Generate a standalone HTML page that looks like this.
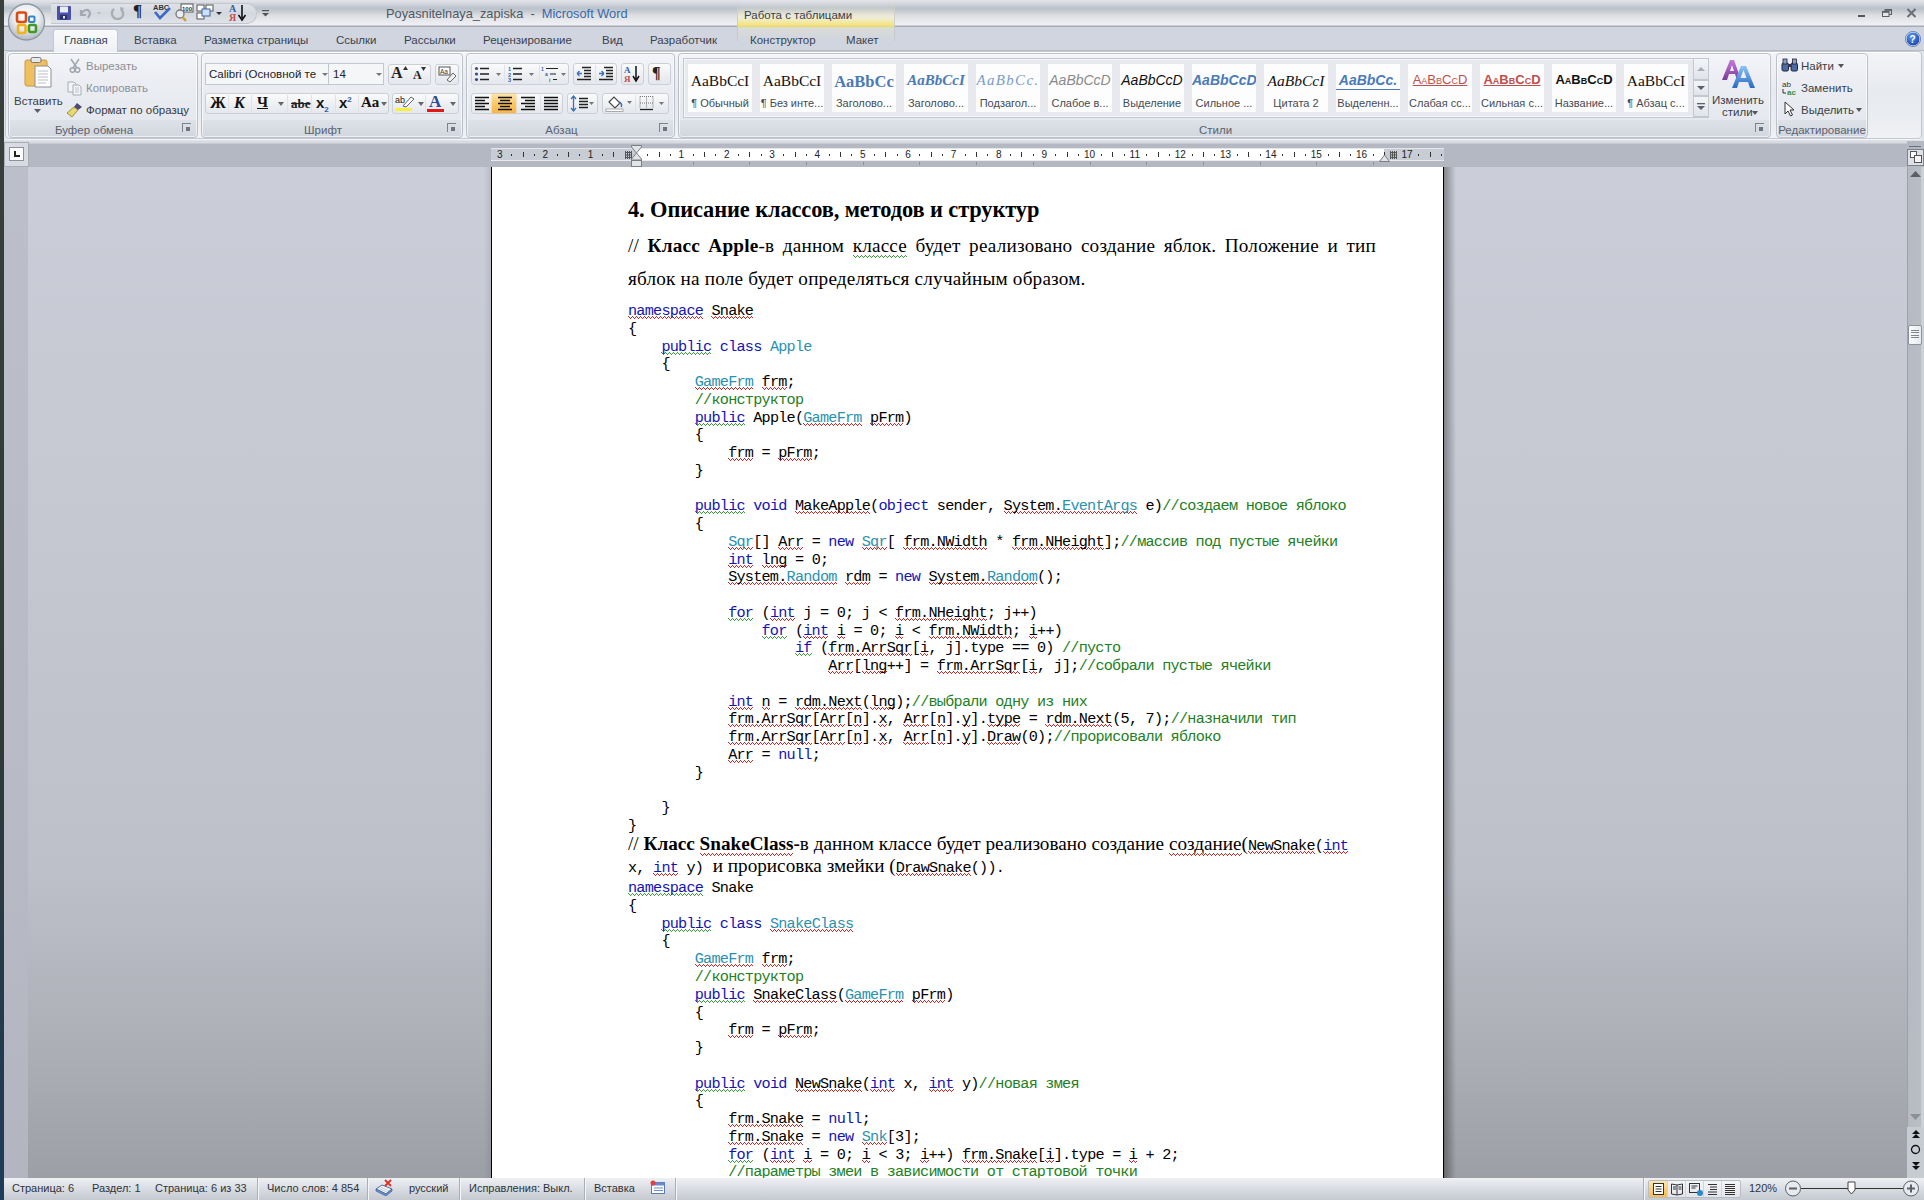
<!DOCTYPE html>
<html><head><meta charset="utf-8"><style>
*{box-sizing:border-box}
html,body{margin:0;padding:0;width:1924px;height:1200px;overflow:hidden;background:#cfd4dc;font-family:"Liberation Sans",sans-serif;}
.a{position:absolute}
#strip{left:0;top:0;width:4px;height:1200px;background:linear-gradient(#3a403c,#2f3a36 60%,#1e3b5a)}
#title{left:4px;top:0;width:1920px;height:27px;background:linear-gradient(#e3e4e8 0px,#d2d6dc 4px,#b9c2cb 8px,#c4cad1 11px,#dcdde0 15px,#e6e8ec 20px,#eef0f5 25px,#a6abb3 26px)}
#tabs{left:4px;top:27px;width:1920px;height:24px;background:#d0d5df;border-bottom:1px solid #b8bcc2}
#ribbon{left:4px;top:51px;width:1920px;height:90px;background:#dfe2e8}
#ribpanel{left:5px;top:51px;width:1917px;height:88px;border:1px solid #c3c8cf;border-radius:4px;background:linear-gradient(#f3f4f7 0,#e7eaef 45%,#e9ecf0 75%,#f1f2f5 100%);box-shadow:inset 0 1px 0 #fff,0 1px 0 #f4f5f7}
#rulerband{left:4px;top:141px;width:1920px;height:26px;background:linear-gradient(#d8dbe0 0,#d8dbe0 2px,#b3b8c3 3px,#b3b8c3 26px)}
#docbg{left:4px;top:167px;width:1904px;height:1011px;background:linear-gradient(#cbced8 0%,#c4c7d0 40%,#bdc0c9 70%,#abaeb5 88%,#9c9fa6 100%)}
#vruler{left:4px;top:167px;width:24px;height:1011px;background:linear-gradient(#bcbfc9 0%,#b8bbc5 60%,#b3b6c0 100%)}
#page{left:491px;top:167px;width:953px;height:1011px;background:#fff;border-left:1px solid #000;border-right:1px solid #000}
#pshadow{left:1444px;top:167px;width:12px;height:1011px;background:linear-gradient(90deg,rgba(0,0,0,.35),rgba(0,0,0,0))}
#scroll{left:1907px;top:167px;width:17px;height:1011px;background:linear-gradient(90deg,#9da2aa 0,#9da2aa 1px,#b6bac3 1px,#b9bdc6 14px,#d6d9de 15px,#c4c8cf 17px)}
#status{left:4px;top:1178px;width:1920px;height:22px;background:linear-gradient(#eef0f3,#d9dce2 50%,#c5c9d0)}
#doc{position:absolute;left:0;top:167px;width:1924px;height:1011px;overflow:hidden}
#doc>div{position:absolute;white-space:pre;margin-top:-167px}
.cl{left:628px;font-family:"Liberation Mono",monospace;font-size:15.2px;letter-spacing:-0.77px;line-height:18px;color:#000}
.tx{left:628px;font-family:"Liberation Serif",serif;font-size:19.2px;letter-spacing:0.2px;line-height:22px;color:#000}
.tx.j{width:748px;text-align:justify;text-align-last:justify;white-space:normal}
.h1{left:628px;font-family:"Liberation Serif",serif;font-size:22.4px;font-weight:bold;letter-spacing:-0.1px;line-height:26px;color:#000}
.m{font-family:"Liberation Mono",monospace;font-size:15.2px;letter-spacing:-0.77px}
.k{color:#1414b4}
.t{color:#2b91af}
.g{color:#1e801e}
.r,.w{--c:#c42a2a;background-image:linear-gradient(90deg,var(--c) 0 1px,transparent 1px),linear-gradient(90deg,transparent 0 1px,var(--c) 1px 2px,transparent 2px 3px,var(--c) 3px),linear-gradient(90deg,transparent 0 2px,var(--c) 2px 3px,transparent 3px);background-size:4px 1px;background-repeat:repeat-x;background-position:0 14px,0 15px,0 16px}
.w{--c:#3a9a3a}
.tx .r,.tx .w{background-position:0 20px,0 21px,0 22px;padding-bottom:3px}
.tx .m .r,.tx .m .w{background-position:0 14px,0 15px,0 16px;padding-bottom:0}
.ui{font-family:"Liberation Sans",sans-serif;font-size:11.5px;line-height:14px;white-space:nowrap;color:#333a44}
#qat{left:51px;top:3px;width:206px;height:21px;border-radius:0 10px 10px 0;background:linear-gradient(#dfe2e8,#d3d8df 50%,#dfe3e9);border:1px solid #c2c7cf;border-left:none}
#ctxhead{left:737px;top:4px;width:158px;height:23px;background:linear-gradient(rgba(255,255,255,0) 0,rgba(250,245,200,.5) 60%,#f3e37b 92%,#e8d66a 100%);border-left:1px solid #cdd0c8;border-right:1px solid #cdd0c8}
#ctxtabs{left:737px;top:27px;width:158px;height:14px;border-left:1px solid #c5c9ce;border-right:1px solid #c5c9ce;background:linear-gradient(rgba(240,235,200,.35),rgba(208,213,223,0))}
.tab{top:33px;color:#3a4350}
#tabactive{left:53px;top:29px;width:65px;height:23px;border:1px solid #c4c9d1;border-bottom:none;border-radius:3px 3px 0 0;background:linear-gradient(#f9fafc,#eef0f5)}
.grp{top:53px;height:85px;border:1px solid #bcc1c9;border-radius:4px;background:linear-gradient(#f3f4f8 0,#eceef3 30%,#e5e8ee 80%,#dde1e8 80%,#d2d7df 100%);box-shadow:inset 0 0 0 1px rgba(255,255,255,.6)}
.gl{position:absolute;left:0;right:18px;bottom:0px;text-align:center;font-size:11.5px;line-height:14px;color:#5a626d;white-space:nowrap}
.lnch{position:absolute;right:6px;bottom:5px;width:9px;height:9px;border-left:1px solid #7b838d;border-top:1px solid #7b838d}
.lnch:after{content:"";position:absolute;left:3px;top:3px;width:4px;height:4px;background:#6d7580}
.fld{height:22px;border:1px solid #c3c8d0;background:#f5f6f8}
.fld span{position:absolute;top:3px;font-size:11.5px;line-height:14px;color:#222;white-space:nowrap}
.fld i{position:absolute;top:9px;width:0;height:0;border-left:3px solid transparent;border-right:3px solid transparent;border-top:3px solid #777}
.bgrp{border:1px solid #cbd0d7;border-radius:3px;background:linear-gradient(#fbfbfc,#eef0f3 50%,#e4e7ec)}
.sep{width:1px;height:17px;background:#dfe2e7}
#gal{left:683px;top:58px;width:1026px;height:60px;border:1px solid #c3c8d0;background:#e7e9ee;box-shadow:inset 0 0 0 1px #f6f7f9}
.tile{top:64px;width:64px;height:48px;background:#fdfdfd}
.smp{position:absolute;left:0;right:0;top:8px;text-align:center;white-space:nowrap;line-height:19px;overflow:hidden}
.tl{position:absolute;left:0;right:0;top:32px;text-align:center;font-size:11px;line-height:14px;color:#444b55;white-space:nowrap;overflow:hidden}
#galsc{left:1693px;top:58px;width:16px;height:60px}
#galsc div{position:absolute;left:0;width:16px;border:1px solid #c3c8d0;background:linear-gradient(#f4f5f8,#e0e3e9)}
.rn{top:149px;width:20px;text-align:center;font-size:10px;line-height:12px;color:#222}
.st{top:1181px;font-size:11px;line-height:14px;color:#2e343c;white-space:nowrap}
.ssep{top:1178px;width:2px;height:22px;background:linear-gradient(90deg,#aab0b8 0 1px,#f4f5f7 1px 2px)}
.sbsep{top:1181px;width:1px;height:16px;background:#d0d4da}
#plshadow{left:484px;top:167px;width:7px;height:1011px;background:linear-gradient(90deg,rgba(60,60,80,0),rgba(60,60,80,.13))}

</style></head><body>
<div id="strip" class="a"></div>
<div id="title" class="a"></div>
<div id="tabs" class="a"></div>
<div id="ribbon" class="a"></div>
<div id="ribpanel" class="a"></div>
<div id="rulerband" class="a"></div>
<div id="docbg" class="a"></div>
<div id="vruler" class="a"></div>
<div id="page" class="a"></div>
<div id="pshadow" class="a"></div>
<div id="plshadow" class="a"></div>
<div id="scroll" class="a"></div>
<div id="status" class="a"></div>

<!-- title bar -->
<div class="a" id="qat"></div>
<div class="a ui" style="left:386px;top:7px;font-size:12.8px;color:#4f5864">Poyasnitelnaya_zapiska&nbsp; - &nbsp;<span style="color:#3b68a8">Microsoft Word</span></div>
<div class="a" id="ctxhead"></div>
<div class="a ui" style="left:744px;top:8px;color:#3a3f47">Работа с таблицами</div>
<div class="a" id="ctxtabs"></div>

<!-- tabs -->
<div class="a" id="tabactive"></div>
<div class="a ui tab" style="left:64px">Главная</div>
<div class="a ui tab" style="left:134px">Вставка</div>
<div class="a ui tab" style="left:204px">Разметка страницы</div>
<div class="a ui tab" style="left:336px">Ссылки</div>
<div class="a ui tab" style="left:404px">Рассылки</div>
<div class="a ui tab" style="left:483px">Рецензирование</div>
<div class="a ui tab" style="left:602px">Вид</div>
<div class="a ui tab" style="left:650px">Разработчик</div>
<div class="a ui tab" style="left:750px">Конструктор</div>
<div class="a ui tab" style="left:846px">Макет</div>

<!-- ribbon groups -->
<div class="a grp" style="left:8px;width:190px"><div class="gl">Буфер обмена</div><div class="lnch"></div></div>
<div class="a grp" style="left:201px;width:262px"><div class="gl">Шрифт</div><div class="lnch"></div></div>
<div class="a grp" style="left:466px;width:209px"><div class="gl">Абзац</div><div class="lnch"></div></div>
<div class="a grp" style="left:678px;width:1093px"><div class="gl">Стили</div><div class="lnch"></div></div>
<div class="a grp" style="left:1776px;width:92px"><div class="gl" style="left:-4px;right:-4px">Редактирование</div></div>

<!-- office button -->
<svg class="a" style="left:6px;top:2px" width="42" height="42" viewBox="0 0 42 42">
<defs><radialGradient id="ob" cx="50%" cy="35%" r="60%"><stop offset="0" stop-color="#ffffff"/><stop offset=".6" stop-color="#e9ecf0"/><stop offset="1" stop-color="#b9c0c8"/></radialGradient></defs>
<circle cx="20.5" cy="20" r="18" fill="url(#ob)" stroke="#8e98a3" stroke-width="1.3"/>
<rect x="11" y="10.5" width="9" height="9.5" rx="2" fill="none" stroke="#e04a10" stroke-width="2.6"/>
<rect x="23" y="14.5" width="5.5" height="5.5" rx="1" fill="none" stroke="#2f86c8" stroke-width="2"/>
<rect x="12" y="23" width="7.5" height="8" rx="1.5" fill="none" stroke="#f2b21a" stroke-width="2.6"/>
<rect x="23" y="23" width="7" height="7" rx="1.5" fill="none" stroke="#3f9a2a" stroke-width="2.6"/>
</svg>

<!-- QAT icons -->
<svg class="a" style="left:56px;top:5px" width="16" height="16" viewBox="0 0 16 16"><rect x="1" y="1" width="14" height="14" rx="1" fill="#4a4fa8"/><rect x="4" y="1.5" width="8" height="6" fill="#e8ecf6"/><rect x="4" y="10" width="7" height="4.5" fill="#2a2f70"/><rect x="7" y="11" width="2" height="2.5" fill="#e8ecf6"/></svg>
<svg class="a" style="left:78px;top:6px" width="24" height="14" viewBox="0 0 24 14"><path d="M3 4 L3 9 L8 9 M3 9 C5 3,12 2,12 8 L10 12" fill="none" stroke="#a3a9b3" stroke-width="2.2"/><path d="M19 6 L23 6 L21 8.5Z" fill="#b5bac2"/></svg>
<svg class="a" style="left:110px;top:6px" width="16" height="14" viewBox="0 0 16 14"><path d="M4 3 C0 6,2 13,8 13 C13 13,15 7,11 3" fill="none" stroke="#a8aeb8" stroke-width="2.4"/><path d="M10 1 L14 2 L11 6Z" fill="#a8aeb8"/></svg>
<div class="a" style="left:133px;top:1px;font:bold 17px 'Liberation Serif';color:#222">¶</div>
<svg class="a" style="left:152px;top:3px" width="20" height="18" viewBox="0 0 20 18"><text x="1" y="7" font-family="Liberation Sans" font-weight="bold" font-size="7.5" fill="#333">ABC</text><path d="M3 9 L8 15 L18 5" fill="none" stroke="#3c68c9" stroke-width="2.6"/></svg>
<svg class="a" style="left:174px;top:3px" width="20" height="19" viewBox="0 0 20 19"><rect x="7" y="1" width="12" height="8" fill="#fff" stroke="#555" stroke-width="1"/><text x="8" y="8" font-family="Liberation Sans" font-weight="bold" font-size="6" fill="#333">100</text><circle cx="6" cy="11" r="4" fill="#e8eef4" stroke="#777" stroke-width="1.3"/><path d="M8.5 14 L12 18" stroke="#c8a040" stroke-width="2.5"/></svg>
<svg class="a" style="left:196px;top:4px" width="28" height="17" viewBox="0 0 28 17"><rect x="1" y="1" width="7" height="6" fill="#fff" stroke="#555"/><rect x="10" y="1" width="7" height="6" fill="#fff" stroke="#555"/><rect x="1" y="9" width="7" height="6" fill="#fff" stroke="#555"/><rect x="6" y="5" width="8" height="7" fill="#cfe0f5" stroke="#3a64a8"/><path d="M20 8 L26 8 L23 11Z" fill="#333"/></svg>
<svg class="a" style="left:228px;top:3px" width="20" height="19" viewBox="0 0 20 19"><text x="1" y="9" font-family="Liberation Serif" font-weight="bold" font-size="10" fill="#2e5fa8">A</text><text x="1" y="18" font-family="Liberation Serif" font-weight="bold" font-size="10" fill="#c05050">Я</text><path d="M14 2 L14 15 M10.5 12 L14 17 L17.5 12" fill="none" stroke="#111" stroke-width="1.6"/></svg>
<svg class="a" style="left:261px;top:9px" width="9" height="8" viewBox="0 0 9 8"><rect x="1" y="1" width="7" height="1.2" fill="#555"/><path d="M1 4 L8 4 L4.5 7.5Z" fill="#555"/></svg>

<!-- window controls -->
<div class="a" style="left:1858px;top:15px;width:7px;height:2px;background:#50555c"></div>
<svg class="a" style="left:1882px;top:9px" width="10" height="8" viewBox="0 0 10 8"><rect x="3" y="0.5" width="6.5" height="5" fill="none" stroke="#5a5f66"/><rect x="0.5" y="2.5" width="6.5" height="5" fill="#e4e6ea" stroke="#5a5f66"/><rect x="0.5" y="2.5" width="6.5" height="1.3" fill="#5a5f66"/><rect x="3" y="0.5" width="6.5" height="1.3" fill="#5a5f66"/></svg>
<svg class="a" style="left:1906px;top:8px" width="11" height="10" viewBox="0 0 11 10"><path d="M1.5 1 L9.5 9 M9.5 1 L1.5 9" stroke="#6a6f76" stroke-width="2"/></svg>
<svg class="a" style="left:1905px;top:31px" width="16" height="16" viewBox="0 0 16 16"><defs><radialGradient id="hb" cx="40%" cy="30%" r="70%"><stop offset="0" stop-color="#5c9cf0"/><stop offset="1" stop-color="#1c44a8"/></radialGradient></defs><circle cx="8" cy="8" r="7" fill="url(#hb)" stroke="#dfe8f8" stroke-width="1"/><circle cx="8" cy="8" r="7.6" fill="none" stroke="#3058a0" stroke-width=".6"/><text x="4.6" y="12" font-family="Liberation Sans" font-weight="bold" font-size="10" fill="#fff">?</text></svg>

<!-- clipboard group -->
<svg class="a" style="left:22px;top:56px" width="32" height="34" viewBox="0 0 32 34"><rect x="3" y="4" width="22" height="26" rx="2" fill="#f0c060" stroke="#c89840" stroke-width="1"/><rect x="9" y="1.5" width="10" height="5" rx="1.5" fill="#e8e8e8" stroke="#777" stroke-width="1"/><path d="M13 10 L26 10 L29 13 L29 31 L13 31Z" fill="#fff" stroke="#8a8f96" stroke-width="1"/><path d="M16 15h10M16 18h10M16 21h10M16 24h10M16 27h8" stroke="#b8c0c8" stroke-width="1"/></svg>
<div class="a ui" style="left:14px;top:94px;color:#3a3f46">Вставить</div>
<svg class="a" style="left:34px;top:109px" width="7" height="4"><path d="M0 0 L7 0 L3.5 4Z" fill="#5a5f66"/></svg>
<svg class="a" style="left:68px;top:58px" width="14" height="15" viewBox="0 0 14 15"><path d="M3 1 L9 10 M11 1 L5 10" stroke="#a0a6ae" stroke-width="1.5"/><circle cx="4.5" cy="12" r="2.3" fill="none" stroke="#a0a6ae" stroke-width="1.5"/><circle cx="9.5" cy="12" r="2.3" fill="none" stroke="#a0a6ae" stroke-width="1.5"/></svg>
<div class="a ui" style="left:86px;top:59px;color:#8b9099">Вырезать</div>
<svg class="a" style="left:67px;top:81px" width="16" height="15" viewBox="0 0 16 15"><path d="M1 1 L7 1 L9 3 L9 11 L1 11Z" fill="#f4f5f7" stroke="#a8adb4"/><path d="M6 4 L12 4 L14 6 L14 14 L6 14Z" fill="#f4f5f7" stroke="#a8adb4"/><path d="M8 7h4M8 9h4M8 11h4" stroke="#c0c4ca"/></svg>
<div class="a ui" style="left:86px;top:81px;color:#8b9099">Копировать</div>
<svg class="a" style="left:66px;top:102px" width="18" height="16" viewBox="0 0 18 16"><path d="M11 1 L16 5 L12 8 L8 5Z" fill="#4a4a78"/><path d="M8 5 L12 8 L6 15 L1 11Z" fill="#e8d870" stroke="#8a7a30" stroke-width=".8"/></svg>
<div class="a ui" style="left:86px;top:103px;color:#343a42">Формат по образцу</div>

<!-- font group -->
<div class="a fld" style="left:205px;top:63px;width:124px"><span style="left:3px;width:109px;overflow:hidden">Calibri (Основной те</span><i style="left:116px"></i></div>
<div class="a fld" style="left:328px;top:63px;width:56px"><span style="left:4px">14</span><i style="left:47px"></i></div>
<div class="a bgrp" style="left:388px;top:64px;width:43px;height:21px"></div>
<div class="a" style="left:391px;top:64px;font:bold 16px 'Liberation Serif';color:#222">A</div>
<svg class="a" style="left:403px;top:66px" width="5" height="4"><path d="M0 4 L5 4 L2.5 0Z" fill="#333"/></svg>
<div class="a" style="left:413px;top:68px;font:bold 12px 'Liberation Serif';color:#222">A</div>
<svg class="a" style="left:421px;top:67px" width="5" height="4"><path d="M0 0 L5 0 L2.5 4Z" fill="#333"/></svg>
<div class="a bgrp" style="left:435px;top:64px;width:24px;height:21px"></div>
<svg class="a" style="left:438px;top:66px" width="19" height="17" viewBox="0 0 19 17"><rect x="1" y="1" width="11" height="8" fill="#fff" stroke="#555"/><text x="2" y="8" font-family="Liberation Sans" font-size="6.5" fill="#333">Aa</text><path d="M9 14 L15 7 L18 10 L12 16Z" fill="#f2f2f2" stroke="#666"/></svg>

<div class="a bgrp" style="left:205px;top:93px;width:184px;height:21px"></div>
<div class="a sep" style="left:228px;top:95px"></div><div class="a sep" style="left:251px;top:95px"></div><div class="a sep" style="left:287px;top:95px"></div><div class="a sep" style="left:311px;top:95px"></div><div class="a sep" style="left:335px;top:95px"></div><div class="a sep" style="left:358px;top:95px"></div>
<div class="a" style="left:210px;top:94px;font:bold 16px 'Liberation Serif';color:#111">Ж</div>
<div class="a" style="left:234px;top:94px;font:bold italic 16px 'Liberation Serif';color:#111">К</div>
<div class="a" style="left:257px;top:94px;font:bold 15px 'Liberation Serif';color:#111;text-decoration:underline">Ч</div>
<svg class="a" style="left:278px;top:102px" width="6" height="4"><path d="M0 0 L6 0 L3 4Z" fill="#666"/></svg>
<div class="a" style="left:291px;top:96px;font:bold 13px 'Liberation Serif';color:#222;text-decoration:line-through">abe</div>
<div class="a" style="left:316px;top:94px;font:bold 15px 'Liberation Sans';color:#111">x<sub style="font-size:8px;color:#3060b0">2</sub></div>
<div class="a" style="left:339px;top:94px;font:bold 15px 'Liberation Sans';color:#111">x<sup style="font-size:8px;color:#3060b0">2</sup></div>
<div class="a" style="left:361px;top:94px;font:bold 15px 'Liberation Serif';color:#111">Aa</div>
<svg class="a" style="left:381px;top:102px" width="6" height="4"><path d="M0 0 L6 0 L3 4Z" fill="#666"/></svg>
<div class="a bgrp" style="left:392px;top:93px;width:67px;height:21px"></div>
<div class="a sep" style="left:425px;top:95px"></div>
<svg class="a" style="left:394px;top:94px" width="22" height="18" viewBox="0 0 22 18"><text x="1" y="9" font-family="Liberation Sans" font-size="9" fill="#222">ab</text><path d="M9 12 L17 3 L20 5 L12 13Z" fill="#fff" stroke="#666" stroke-width="1"/><rect x="1" y="14" width="17" height="3" fill="#f8f040"/></svg>
<svg class="a" style="left:418px;top:102px" width="6" height="4"><path d="M0 0 L6 0 L3 4Z" fill="#666"/></svg>
<div class="a" style="left:429px;top:92px;font:bold 17px 'Liberation Serif';color:#2a4a98">A</div>
<div class="a" style="left:427px;top:109px;width:17px;height:3px;background:#e01818"></div>
<svg class="a" style="left:450px;top:102px" width="6" height="4"><path d="M0 0 L6 0 L3 4Z" fill="#666"/></svg>

<!-- paragraph group -->
<div class="a bgrp" style="left:471px;top:63px;width:98px;height:22px"></div>
<div class="a sep" style="left:504px;top:65px"></div><div class="a sep" style="left:539px;top:65px"></div>
<svg class="a" style="left:474px;top:66px" width="30" height="16" viewBox="0 0 30 16"><circle cx="2.5" cy="2.5" r="1.6" fill="#3a4a80"/><circle cx="2.5" cy="8" r="1.6" fill="#3a4a80"/><circle cx="2.5" cy="13.5" r="1.6" fill="#3a4a80"/><path d="M6 2.5h9M6 8h9M6 13.5h9" stroke="#222" stroke-width="1.3"/><path d="M22 7 L27 7 L24.5 10Z" fill="#777"/></svg>
<svg class="a" style="left:508px;top:66px" width="30" height="16" viewBox="0 0 30 16"><text x="0" y="5" font-family="Liberation Sans" font-size="5.5" font-weight="bold" fill="#3060b0">1</text><text x="0" y="10.5" font-family="Liberation Sans" font-size="5.5" font-weight="bold" fill="#3060b0">2</text><text x="0" y="16" font-family="Liberation Sans" font-size="5.5" font-weight="bold" fill="#3060b0">3</text><path d="M5 2.5h9M5 8h9M5 13.5h9" stroke="#222" stroke-width="1.3"/><path d="M21 7 L26 7 L23.5 10Z" fill="#777"/></svg>
<svg class="a" style="left:541px;top:66px" width="28" height="16" viewBox="0 0 28 16"><text x="0" y="5" font-family="Liberation Sans" font-size="5" font-weight="bold" fill="#3060b0">1</text><text x="4" y="10" font-family="Liberation Sans" font-size="5" font-weight="bold" fill="#3060b0">a</text><text x="8" y="15.5" font-family="Liberation Sans" font-size="5" font-weight="bold" fill="#3060b0">i</text><path d="M5 2.5h12M9 8h6M12 13.5h4" stroke="#222" stroke-width="1.2"/><path d="M20 7 L25 7 L22.5 10Z" fill="#777"/></svg>
<div class="a bgrp" style="left:573px;top:63px;width:44px;height:22px"></div>
<div class="a sep" style="left:595px;top:65px"></div>
<svg class="a" style="left:576px;top:66px" width="16" height="16" viewBox="0 0 16 16"><path d="M6 1.5h9M8 4.5h7M8 7.5h7M8 10.5h7M1 13.5h14" stroke="#222" stroke-width="1.3"/><path d="M1 7.5 L6 7.5 M1 7.5 L3.5 5 M1 7.5 L3.5 10" stroke="#3a70c0" stroke-width="1.3" fill="none"/></svg>
<svg class="a" style="left:598px;top:66px" width="16" height="16" viewBox="0 0 16 16"><path d="M6 1.5h9M8 4.5h7M8 7.5h7M8 10.5h7M1 13.5h14" stroke="#222" stroke-width="1.3"/><path d="M1 7.5 L6 7.5 M6 7.5 L3.5 5 M6 7.5 L3.5 10" stroke="#3a70c0" stroke-width="1.3" fill="none"/></svg>
<div class="a bgrp" style="left:621px;top:63px;width:23px;height:22px"></div>
<svg class="a" style="left:623px;top:65px" width="19" height="18" viewBox="0 0 19 18"><text x="1" y="8" font-family="Liberation Serif" font-weight="bold" font-size="9" fill="#2e5fa8">A</text><text x="1" y="17" font-family="Liberation Serif" font-weight="bold" font-size="9" fill="#c05050">Я</text><path d="M13 1 L13 14 M10 11 L13 16 L16 11" fill="none" stroke="#111" stroke-width="1.5"/></svg>
<div class="a bgrp" style="left:648px;top:63px;width:23px;height:22px"></div>
<div class="a" style="left:652px;top:64px;font:bold 16px 'Liberation Serif';color:#222">¶</div>

<div class="a bgrp" style="left:471px;top:93px;width:92px;height:21px"></div>
<div class="a" style="left:492px;top:94px;width:24px;height:19px;background:linear-gradient(#fde4a8,#fbc868 50%,#f7b44a);box-shadow:0 0 2px #f0c070"></div>
<div class="a sep" style="left:540px;top:95px"></div>
<svg class="a" style="left:475px;top:96px" width="90" height="15" viewBox="0 0 90 15"><g stroke="#111" stroke-width="1.4"><path d="M0 1.5h14M0 4.5h10M0 7.5h14M0 10.5h10M0 13.5h14"/><path d="M23 1.5h14M25 4.5h10M23 7.5h14M25 10.5h10M23 13.5h14"/><path d="M46 1.5h14M50 4.5h10M46 7.5h14M50 10.5h10M46 13.5h14"/><path d="M69 1.5h14M69 4.5h14M69 7.5h14M69 10.5h14M69 13.5h14"/></g></svg>
<div class="a bgrp" style="left:567px;top:93px;width:31px;height:21px"></div>
<svg class="a" style="left:570px;top:95px" width="26" height="17" viewBox="0 0 26 17"><path d="M3.5 1 L3.5 16 M1 4 L3.5 1 L6 4 M1 13 L3.5 16 L6 13" stroke="#3a70c0" stroke-width="1.3" fill="none"/><path d="M9 3.5h9M9 6.5h9M9 9.5h9M9 12.5h9" stroke="#222" stroke-width="1.3"/><path d="M19 7 L24 7 L21.5 10Z" fill="#777"/></svg>
<div class="a bgrp" style="left:602px;top:93px;width:67px;height:21px"></div>
<div class="a sep" style="left:635px;top:95px"></div>
<svg class="a" style="left:605px;top:94px" width="30" height="18" viewBox="0 0 30 18"><path d="M4 8 L9 3 L15 9 L10 14Z" fill="#fff" stroke="#444" stroke-width="1.1"/><path d="M14 8 C17 9,17 12,16 13" stroke="#3a70c0" stroke-width="1.6" fill="none"/><rect x="1" y="15" width="17" height="2.5" fill="#fff" stroke="#999" stroke-width=".8"/><path d="M22 7 L27 7 L24.5 10Z" fill="#777"/></svg>
<svg class="a" style="left:638px;top:95px" width="30" height="16" viewBox="0 0 30 16"><g stroke="#777" stroke-width="1" stroke-dasharray="1 1"><path d="M2 1.5h13M2 8h13M2 1.5v12M8.5 1.5v12M15 1.5v12"/></g><path d="M2 14.5h13" stroke="#222" stroke-width="1.3"/><path d="M21 7 L26 7 L23.5 10Z" fill="#777"/></svg>

<!-- styles group -->
<div class="a" id="gal"></div>
<div class="a tile" style="left:688px"><div class="smp" style="font:15.5px 'Liberation Serif';color:#111">AaBbCcI</div><div class="tl">¶ Обычный</div></div>
<div class="a tile" style="left:760px"><div class="smp" style="font:15.5px 'Liberation Serif';color:#111">AaBbCcI</div><div class="tl">¶ Без инте...</div></div>
<div class="a tile" style="left:832px"><div class="smp" style="font:bold 16.5px 'Liberation Serif';color:#4a7ab8">AaBbCc</div><div class="tl">Заголово...</div></div>
<div class="a tile" style="left:904px"><div class="smp" style="font:bold italic 15px 'Liberation Serif';color:#4a7ab8">AaBbCcI</div><div class="tl">Заголово...</div></div>
<div class="a tile" style="left:976px"><div class="smp" style="font:italic 15px 'Liberation Serif';color:#7a9cc8;letter-spacing:1.3px">AaBbCc.</div><div class="tl">Подзагол...</div></div>
<div class="a tile" style="left:1048px"><div class="smp" style="font:italic 14px 'Liberation Sans';color:#8a8a8a">AaBbCcD</div><div class="tl">Слабое в...</div></div>
<div class="a tile" style="left:1120px"><div class="smp" style="font:italic 14px 'Liberation Sans';color:#111">AaBbCcD</div><div class="tl">Выделение</div></div>
<div class="a tile" style="left:1192px"><div class="smp" style="font:bold italic 14px 'Liberation Sans';color:#4a7ab8">AaBbCcD</div><div class="tl">Сильное ...</div></div>
<div class="a tile" style="left:1264px"><div class="smp" style="font:italic 15.5px 'Liberation Serif';color:#111">AaBbCcI</div><div class="tl">Цитата 2</div></div>
<div class="a tile" style="left:1336px"><div class="smp" style="font:bold italic 14px 'Liberation Sans';color:#4a7ab8;border-bottom:1px solid #4a7ab8;line-height:17px">AaBbCc.</div><div class="tl">Выделенн...</div></div>
<div class="a tile" style="left:1408px"><div class="smp" style="font:13px 'Liberation Sans';font-variant:small-caps;color:#c0504d;text-decoration:underline">AaBbCcD</div><div class="tl">Слабая сс...</div></div>
<div class="a tile" style="left:1480px"><div class="smp" style="font:bold 13px 'Liberation Sans';font-variant:small-caps;color:#c0504d;text-decoration:underline">AaBbCcD</div><div class="tl">Сильная с...</div></div>
<div class="a tile" style="left:1552px"><div class="smp" style="font:bold 13px 'Liberation Sans';font-variant:small-caps;color:#111">AaBbCcD</div><div class="tl">Название...</div></div>
<div class="a tile" style="left:1624px"><div class="smp" style="font:15.5px 'Liberation Serif';color:#111">AaBbCcI</div><div class="tl">¶ Абзац с...</div></div>
<div class="a" id="galsc"><div style="top:0;height:22px"></div><div style="top:22px;height:16px"></div><div style="top:38px;height:21px"></div></div>
<svg class="a" style="left:1697px;top:67px" width="8" height="5"><path d="M0 4 L8 4 L4 0Z" fill="#a8aeb6"/></svg>
<svg class="a" style="left:1697px;top:86px" width="8" height="5"><path d="M0 0 L8 0 L4 4Z" fill="#5a616a"/></svg>
<svg class="a" style="left:1697px;top:103px" width="8" height="8"><rect x="0" y="0" width="8" height="1.3" fill="#5a616a"/><path d="M0 3 L8 3 L4 7Z" fill="#5a616a"/></svg>
<svg class="a" style="left:1720px;top:58px" width="38" height="32" viewBox="0 0 38 32"><defs><linearGradient id="ga1" x1="0" y1="0" x2="0" y2="1"><stop offset="0" stop-color="#c77ad8"/><stop offset="1" stop-color="#7a3a9a"/></linearGradient><linearGradient id="ga2" x1="0" y1="0" x2="0" y2="1"><stop offset="0" stop-color="#8ac4f4"/><stop offset="1" stop-color="#2a6ac8"/></linearGradient></defs><path d="M2 22 L10 2 L14 2 L21 22 L17 22 L15 16 L9 16 L7 22Z M10 13 L14 13 L12 7Z" fill="url(#ga1)"/><path d="M12 30 L21 8 L26 8 L35 30 L30 30 L28 24 L19 24 L17 30Z M20.5 20 L26.5 20 L23.5 12Z" fill="url(#ga2)"/></svg>
<div class="a ui" style="left:1712px;top:93px;color:#3a3f46">Изменить</div>
<div class="a ui" style="left:1722px;top:105px;color:#3a3f46">стили</div>
<svg class="a" style="left:1752px;top:111px" width="6" height="4"><path d="M0 0 L6 0 L3 4Z" fill="#555"/></svg>

<!-- editing group -->
<svg class="a" style="left:1781px;top:58px" width="18" height="14" viewBox="0 0 18 14"><rect x="1" y="5" width="6.5" height="8" rx="1.5" fill="#4a6aa8" stroke="#223"/><rect x="10" y="5" width="6.5" height="8" rx="1.5" fill="#4a6aa8" stroke="#223"/><rect x="2" y="1" width="4" height="5" fill="#8aa0c8" stroke="#223" stroke-width=".8"/><rect x="11.5" y="1" width="4" height="5" fill="#8aa0c8" stroke="#223" stroke-width=".8"/><rect x="7" y="6" width="3.5" height="3" fill="#334"/></svg>
<div class="a ui" style="left:1801px;top:59px;color:#3a3f46">Найти</div>
<svg class="a" style="left:1838px;top:64px" width="6" height="4"><path d="M0 0 L6 0 L3 4Z" fill="#555"/></svg>
<svg class="a" style="left:1781px;top:80px" width="18" height="16" viewBox="0 0 18 16"><text x="1" y="7" font-family="Liberation Sans" font-size="8" fill="#333">ab</text><text x="6" y="15" font-family="Liberation Sans" font-weight="bold" font-size="8" fill="#3a8a3a">ac</text><path d="M2 9 L2 13 L5 13" stroke="#333" fill="none"/></svg>
<div class="a ui" style="left:1801px;top:81px;color:#3a3f46">Заменить</div>
<svg class="a" style="left:1784px;top:101px" width="12" height="16" viewBox="0 0 12 16"><path d="M1 1 L1 13 L4 10 L6.5 15 L8.5 14 L6 9 L10 9Z" fill="#fff" stroke="#333" stroke-width="1"/></svg>
<div class="a ui" style="left:1801px;top:103px;color:#3a3f46">Выделить</div>
<svg class="a" style="left:1856px;top:108px" width="6" height="4"><path d="M0 0 L6 0 L3 4Z" fill="#555"/></svg>

<!-- ruler -->
<div class="a" style="left:491px;top:148px;width:953px;height:13px;background:#c8ccd5;border-top:1px solid #e4e6ea;border-bottom:1px solid #e9ebee"></div>
<div class="a" style="left:636px;top:149px;width:748px;height:11px;background:#fff"></div>
<div class="a rn" style="left:489.9px">3</div>
<div class="a" style="left:511px;top:154px;width:1px;height:2px;background:#333"></div>
<div class="a" style="left:523px;top:152px;width:1px;height:5px;background:#333"></div>
<div class="a" style="left:534px;top:154px;width:1px;height:2px;background:#333"></div>
<div class="a rn" style="left:535.3px">2</div>
<div class="a" style="left:557px;top:154px;width:1px;height:2px;background:#333"></div>
<div class="a" style="left:568px;top:152px;width:1px;height:5px;background:#333"></div>
<div class="a" style="left:579px;top:154px;width:1px;height:2px;background:#333"></div>
<div class="a rn" style="left:580.6px">1</div>
<div class="a" style="left:602px;top:154px;width:1px;height:2px;background:#333"></div>
<div class="a" style="left:613px;top:152px;width:1px;height:5px;background:#333"></div>
<div class="a" style="left:625px;top:154px;width:1px;height:2px;background:#333"></div>
<div class="a" style="left:647px;top:154px;width:1px;height:2px;background:#333"></div>
<div class="a" style="left:659px;top:152px;width:1px;height:5px;background:#333"></div>
<div class="a" style="left:670px;top:154px;width:1px;height:2px;background:#333"></div>
<div class="a rn" style="left:671.4px">1</div>
<div class="a" style="left:693px;top:154px;width:1px;height:2px;background:#333"></div>
<div class="a" style="left:704px;top:152px;width:1px;height:5px;background:#333"></div>
<div class="a" style="left:715px;top:154px;width:1px;height:2px;background:#333"></div>
<div class="a rn" style="left:716.7px">2</div>
<div class="a" style="left:738px;top:154px;width:1px;height:2px;background:#333"></div>
<div class="a" style="left:749px;top:152px;width:1px;height:5px;background:#333"></div>
<div class="a" style="left:761px;top:154px;width:1px;height:2px;background:#333"></div>
<div class="a rn" style="left:762.0px">3</div>
<div class="a" style="left:783px;top:154px;width:1px;height:2px;background:#333"></div>
<div class="a" style="left:795px;top:152px;width:1px;height:5px;background:#333"></div>
<div class="a" style="left:806px;top:154px;width:1px;height:2px;background:#333"></div>
<div class="a rn" style="left:807.4px">4</div>
<div class="a" style="left:829px;top:154px;width:1px;height:2px;background:#333"></div>
<div class="a" style="left:840px;top:152px;width:1px;height:5px;background:#333"></div>
<div class="a" style="left:851px;top:154px;width:1px;height:2px;background:#333"></div>
<div class="a rn" style="left:852.8px">5</div>
<div class="a" style="left:874px;top:154px;width:1px;height:2px;background:#333"></div>
<div class="a" style="left:885px;top:152px;width:1px;height:5px;background:#333"></div>
<div class="a" style="left:897px;top:154px;width:1px;height:2px;background:#333"></div>
<div class="a rn" style="left:898.1px">6</div>
<div class="a" style="left:919px;top:154px;width:1px;height:2px;background:#333"></div>
<div class="a" style="left:931px;top:152px;width:1px;height:5px;background:#333"></div>
<div class="a" style="left:942px;top:154px;width:1px;height:2px;background:#333"></div>
<div class="a rn" style="left:943.5px">7</div>
<div class="a" style="left:965px;top:154px;width:1px;height:2px;background:#333"></div>
<div class="a" style="left:976px;top:152px;width:1px;height:5px;background:#333"></div>
<div class="a" style="left:987px;top:154px;width:1px;height:2px;background:#333"></div>
<div class="a rn" style="left:988.8px">8</div>
<div class="a" style="left:1010px;top:154px;width:1px;height:2px;background:#333"></div>
<div class="a" style="left:1021px;top:152px;width:1px;height:5px;background:#333"></div>
<div class="a" style="left:1033px;top:154px;width:1px;height:2px;background:#333"></div>
<div class="a rn" style="left:1034.2px">9</div>
<div class="a" style="left:1055px;top:154px;width:1px;height:2px;background:#333"></div>
<div class="a" style="left:1067px;top:152px;width:1px;height:5px;background:#333"></div>
<div class="a" style="left:1078px;top:154px;width:1px;height:2px;background:#333"></div>
<div class="a rn" style="left:1079.5px">10</div>
<div class="a" style="left:1101px;top:154px;width:1px;height:2px;background:#333"></div>
<div class="a" style="left:1112px;top:152px;width:1px;height:5px;background:#333"></div>
<div class="a" style="left:1124px;top:154px;width:1px;height:2px;background:#333"></div>
<div class="a rn" style="left:1124.8px">11</div>
<div class="a" style="left:1146px;top:154px;width:1px;height:2px;background:#333"></div>
<div class="a" style="left:1158px;top:152px;width:1px;height:5px;background:#333"></div>
<div class="a" style="left:1169px;top:154px;width:1px;height:2px;background:#333"></div>
<div class="a rn" style="left:1170.2px">12</div>
<div class="a" style="left:1192px;top:154px;width:1px;height:2px;background:#333"></div>
<div class="a" style="left:1203px;top:152px;width:1px;height:5px;background:#333"></div>
<div class="a" style="left:1214px;top:154px;width:1px;height:2px;background:#333"></div>
<div class="a rn" style="left:1215.6px">13</div>
<div class="a" style="left:1237px;top:154px;width:1px;height:2px;background:#333"></div>
<div class="a" style="left:1248px;top:152px;width:1px;height:5px;background:#333"></div>
<div class="a" style="left:1260px;top:154px;width:1px;height:2px;background:#333"></div>
<div class="a rn" style="left:1260.9px">14</div>
<div class="a" style="left:1282px;top:154px;width:1px;height:2px;background:#333"></div>
<div class="a" style="left:1294px;top:152px;width:1px;height:5px;background:#333"></div>
<div class="a" style="left:1305px;top:154px;width:1px;height:2px;background:#333"></div>
<div class="a rn" style="left:1306.2px">15</div>
<div class="a" style="left:1328px;top:154px;width:1px;height:2px;background:#333"></div>
<div class="a" style="left:1339px;top:152px;width:1px;height:5px;background:#333"></div>
<div class="a" style="left:1350px;top:154px;width:1px;height:2px;background:#333"></div>
<div class="a rn" style="left:1351.6px">16</div>
<div class="a" style="left:1373px;top:154px;width:1px;height:2px;background:#333"></div>
<div class="a" style="left:1384px;top:152px;width:1px;height:5px;background:#333"></div>
<div class="a" style="left:1396px;top:154px;width:1px;height:2px;background:#333"></div>
<div class="a rn" style="left:1397.0px">17</div>
<div class="a" style="left:1418px;top:154px;width:1px;height:2px;background:#333"></div>
<div class="a" style="left:1430px;top:152px;width:1px;height:5px;background:#333"></div>
<div class="a" style="left:1441px;top:154px;width:1px;height:2px;background:#333"></div>
<div class="a" style="left:693px;top:162px;width:1px;height:3px;background:#8a9099"></div>
<div class="a" style="left:749px;top:162px;width:1px;height:3px;background:#8a9099"></div>
<div class="a" style="left:806px;top:162px;width:1px;height:3px;background:#8a9099"></div>
<div class="a" style="left:863px;top:162px;width:1px;height:3px;background:#8a9099"></div>
<div class="a" style="left:919px;top:162px;width:1px;height:3px;background:#8a9099"></div>
<div class="a" style="left:976px;top:162px;width:1px;height:3px;background:#8a9099"></div>
<div class="a" style="left:1033px;top:162px;width:1px;height:3px;background:#8a9099"></div>
<div class="a" style="left:1090px;top:162px;width:1px;height:3px;background:#8a9099"></div>
<div class="a" style="left:1146px;top:162px;width:1px;height:3px;background:#8a9099"></div>
<div class="a" style="left:1203px;top:162px;width:1px;height:3px;background:#8a9099"></div>
<div class="a" style="left:1260px;top:162px;width:1px;height:3px;background:#8a9099"></div>
<div class="a" style="left:1316px;top:162px;width:1px;height:3px;background:#8a9099"></div>
<div class="a" style="left:1373px;top:162px;width:1px;height:3px;background:#8a9099"></div>
<svg class="a" style="left:625px;top:151px" width="7" height="8"><g fill="#555"><rect x="0" y="0" width="1" height="8"/><rect x="2" y="0" width="1" height="8"/><rect x="4" y="0" width="1" height="8"/><rect x="6" y="0" width="1" height="8"/><rect x="0" y="1" width="7" height="1"/><rect x="0" y="3.5" width="7" height="1"/><rect x="0" y="6" width="7" height="1"/></g></svg>
<svg class="a" style="left:631px;top:145px" width="11" height="22" viewBox="0 0 11 22"><path d="M0.5 0.5 L10.5 0.5 L10.5 2 L5.5 8 L10.5 14 L10.5 15 L0.5 15 L0.5 14 L5.5 8 L0.5 2Z" fill="#e2e4e6" stroke="#7a7f86" stroke-width="1"/><rect x="0.5" y="15.5" width="10" height="6" fill="#e2e4e6" stroke="#7a7f86" stroke-width="1"/></svg>
<svg class="a" style="left:1379px;top:154px" width="11" height="8" viewBox="0 0 11 8"><path d="M0.5 7.5 L5.5 1 L10.5 7.5Z" fill="#e2e4e6" stroke="#7a7f86"/></svg>
<svg class="a" style="left:1390px;top:151px" width="7" height="8"><g fill="#555"><rect x="0" y="0" width="1" height="8"/><rect x="2" y="0" width="1" height="8"/><rect x="4" y="0" width="1" height="8"/><rect x="6" y="0" width="1" height="8"/><rect x="0" y="1" width="7" height="1"/><rect x="0" y="3.5" width="7" height="1"/><rect x="0" y="6" width="7" height="1"/></g></svg>
<!-- tab selector -->
<div class="a" style="left:4px;top:142px;width:25px;height:25px;background:#d8dbe1;border:1px solid #a9aeb6"></div>
<div class="a" style="left:9px;top:147px;width:15px;height:14px;background:#fbfbfc;border:1px solid #8d939b"></div>
<div class="a" style="left:14px;top:151px;width:2px;height:6px;background:#222"></div>
<div class="a" style="left:14px;top:155px;width:6px;height:2px;background:#222"></div>
<!-- scrollbar -->
<div class="a" style="left:1907px;top:141px;width:17px;height:26px;background:#b3b8c3"></div>
<div class="a" style="left:1909px;top:146px;width:12px;height:1px;background:#6a7078"></div>
<div class="a" style="left:1907px;top:149px;width:17px;height:17px;background:#dde0e5;border:1px solid #7d838b"></div>
<svg class="a" style="left:1910px;top:151px" width="12" height="13" viewBox="0 0 12 13"><rect x="0.5" y="0.5" width="6" height="6" fill="#fff" stroke="#555"/><rect x="4.5" y="4.5" width="7" height="7" fill="#f4f4f4" stroke="#555"/></svg>
<svg class="a" style="left:1910px;top:171px" width="11" height="6"><path d="M0 6 L11 6 L5.5 0Z" fill="#5a6068"/></svg>
<div class="a" style="left:1908px;top:325px;width:14px;height:20px;border:1px solid #8d939b;border-radius:2px;background:linear-gradient(90deg,#fdfdfe,#e7eaee)"></div>
<div class="a" style="left:1911px;top:330px;width:8px;height:9px;background:repeating-linear-gradient(#7d838b 0 1px,transparent 1px 2.5px)"></div>
<svg class="a" style="left:1910px;top:1114px" width="11" height="6"><path d="M0 0 L11 0 L5.5 6Z" fill="#8a9098"/></svg>
<div class="a" style="left:1907px;top:1127px;width:17px;height:51px;background:#c7cbd2"></div>
<svg class="a" style="left:1911px;top:1129px" width="10" height="10" viewBox="0 0 10 10"><path d="M1 5 L5 1 L9 5Z M1 9 L5 5 L9 9Z" fill="#111"/></svg>
<svg class="a" style="left:1910px;top:1144px" width="11" height="11" viewBox="0 0 11 11"><circle cx="5.5" cy="5.5" r="4" fill="#c8ccd2" stroke="#111" stroke-width="1.3"/></svg>
<svg class="a" style="left:1911px;top:1161px" width="10" height="10" viewBox="0 0 10 10"><path d="M1 1 L5 5 L9 1Z M1 5 L5 9 L9 5Z" fill="#111"/></svg>

<!-- status bar -->
<div class="a st" style="left:12px">Страница: 6</div>
<div class="a st" style="left:92px">Раздел: 1</div>
<div class="a st" style="left:155px">Страница: 6 из 33</div>
<div class="a ssep" style="left:257px"></div>
<div class="a st" style="left:267px">Число слов: 4 854</div>
<div class="a ssep" style="left:367px"></div>
<svg class="a" style="left:375px;top:1179px" width="19" height="17" viewBox="0 0 19 17"><path d="M1 10 L7 6 L17 10 L11 15Z" fill="#f8f8fa" stroke="#4a6aa8" stroke-width="1"/><path d="M1 10 L1 12 L11 17 L17 12 L17 10 L11 15Z" fill="#6a9ad8" stroke="#3a5a98" stroke-width=".7"/><path d="M4 9.5 L12 13 M6 8.3 L14 11.8" stroke="#9ab" stroke-width=".6"/><path d="M10 1 L16 7 M16 1 L10 7" stroke="#e03020" stroke-width="1.8"/></svg>
<div class="a st" style="left:409px">русский</div>
<div class="a ssep" style="left:459px"></div>
<div class="a st" style="left:469px">Исправления: Выкл.</div>
<div class="a ssep" style="left:584px"></div>
<div class="a st" style="left:594px">Вставка</div>
<svg class="a" style="left:650px;top:1180px" width="16" height="15" viewBox="0 0 16 15"><rect x="1.5" y="2.5" width="13" height="11" fill="#fff" stroke="#5a7ab8"/><rect x="1.5" y="2.5" width="13" height="3" fill="#6a8ac8"/><path d="M4 8h9M4 10.5h9" stroke="#6a8ac8"/><circle cx="3" cy="3" r="2.5" fill="#e04040"/></svg>
<div class="a ssep" style="left:675px"></div>
<div class="a ssep" style="left:1643px"></div>
<div class="a" style="left:1648px;top:1180px;width:93px;height:18px;border:1px solid #b8bdc5;border-radius:2px;background:linear-gradient(#f4f5f7,#e2e5ea)"></div>
<div class="a" style="left:1649px;top:1181px;width:18px;height:16px;background:linear-gradient(#fde7b0,#fbcf78 50%,#f8bd55)"></div>
<div class="a sbsep" style="left:1667px"></div><div class="a sbsep" style="left:1685px"></div><div class="a sbsep" style="left:1703px"></div><div class="a sbsep" style="left:1721px"></div>
<svg class="a" style="left:1651px;top:1182px" width="88" height="14" viewBox="0 0 88 14">
<g fill="none" stroke="#333" stroke-width="1"><rect x="2.5" y="1.5" width="10" height="11" fill="#fff"/><path d="M4.5 4.5h6M4.5 7h6M4.5 9.5h6"/>
<path d="M20.5 2 L26 3 L31.5 2 L31.5 12 L26 13 L20.5 12Z M26 3 L26 13"/><path d="M22 5h3M22 7h3M27.5 5h3M27.5 7h3"/>
<rect x="38.5" y="1.5" width="10" height="9"/><path d="M40.5 4h6M40.5 6h4"/>
<path d="M57 2.5h9M59 5h7M59 7.5h7M57 10h9M57 12.5h9"/>
<path d="M74 2.5h10M74 4.5h10M74 6.5h10M74 8.5h10M74 10.5h10M74 12.5h10"/></g>
<circle cx="49" cy="11" r="3" fill="#2a8ac8"/></svg>
<div class="a st" style="left:1749px">120%</div>
<svg class="a" style="left:1784px;top:1179px" width="140" height="19" viewBox="0 0 140 19"><circle cx="9" cy="9.5" r="7.5" fill="#e8eaee" stroke="#5a6068" stroke-width="1"/><rect x="5" y="8.5" width="8" height="2" fill="#5a6068"/><path d="M17 9.5 L119 9.5" stroke="#333" stroke-width="1.2"/><path d="M64 3 L71 3 L71 11 L67.5 15 L64 11Z" fill="#fff" stroke="#444" stroke-width="1"/><circle cx="127" cy="9.5" r="7.5" fill="#e8eaee" stroke="#5a6068" stroke-width="1"/><rect x="123" y="8.5" width="8" height="2" fill="#5a6068"/><rect x="126" y="5.5" width="2" height="8" fill="#5a6068"/></svg>

<div id="doc">
<div class="h1" style="top:196.7px">4. Описание классов, методов и структур</div>
<div class="tx j" style="top:234.5px">// <b>Класс Apple</b>-в данном <span class="w">классе</span> будет реализовано создание яблок. Положение и тип</div>
<div class="tx" style="top:267.5px">яблок на поле будет определяться случайным образом.</div>
<div class="cl" style="top:302.00px"><span class="k r">namespace</span> <span class="r">Snake</span></div>
<div class="cl" style="top:319.76px">{</div>
<div class="cl" style="top:337.52px">    <span class="k w">public</span> <span class="k">class</span> <span class="t">Apple</span></div>
<div class="cl" style="top:355.28px">    {</div>
<div class="cl" style="top:373.04px">        <span class="t r">GameFrm</span> <span class="r">frm</span>;</div>
<div class="cl" style="top:390.80px">        <span class="g">//конструктор</span></div>
<div class="cl" style="top:408.56px">        <span class="k w">public</span> Apple(<span class="t r">GameFrm</span> <span class="r">pFrm</span>)</div>
<div class="cl" style="top:426.32px">        {</div>
<div class="cl" style="top:444.08px">            <span class="r">frm</span> = <span class="r">pFrm</span>;</div>
<div class="cl" style="top:461.84px">        }</div>
<div class="cl" style="top:497.36px">        <span class="k w">public</span> <span class="k">void</span> <span class="r">MakeApple</span>(<span class="k">object</span> sender, <span class="r">System.</span><span class="t r">EventArgs</span> e)<span class="g">//создаем новое яблоко</span></div>
<div class="cl" style="top:515.12px">        {</div>
<div class="cl" style="top:532.88px">            <span class="t r">Sqr</span>[] <span class="r">Arr</span> = <span class="k">new</span> <span class="t r">Sqr</span>[ <span class="r">frm.NWidth</span> * <span class="r">frm.NHeight</span>];<span class="g">//массив под пустые ячейки</span></div>
<div class="cl" style="top:550.64px">            <span class="k r">int</span> <span class="r">lng</span> = 0;</div>
<div class="cl" style="top:568.40px">            <span class="r">System.</span><span class="t r">Random</span> <span class="r">rdm</span> = <span class="k">new</span> <span class="r">System.</span><span class="t r">Random</span>();</div>
<div class="cl" style="top:603.92px">            <span class="k w">for</span> (<span class="k r">int</span> j = 0; j &lt; <span class="r">frm.NHeight</span>; j++)</div>
<div class="cl" style="top:621.68px">                <span class="k w">for</span> (<span class="k r">int</span> <span class="r">i</span> = 0; <span class="r">i</span> &lt; <span class="r">frm.NWidth</span>; <span class="r">i</span>++)</div>
<div class="cl" style="top:639.44px">                    <span class="k w">if</span> (<span class="r">frm.ArrSqr</span>[<span class="r">i</span>, j].type == 0) <span class="g">//пусто</span></div>
<div class="cl" style="top:657.20px">                        <span class="r">Arr</span>[<span class="r">lng</span>++] = <span class="r">frm.ArrSqr</span>[<span class="r">i</span>, j];<span class="g">//собрали пустые ячейки</span></div>
<div class="cl" style="top:692.72px">            <span class="k r">int</span> <span class="r">n</span> = <span class="r">rdm.Next</span>(<span class="r">lng</span>);<span class="g">//выбрали одну из них</span></div>
<div class="cl" style="top:710.48px">            <span class="r">frm.ArrSqr</span>[<span class="r">Arr</span>[<span class="r">n</span>].<span class="r">x</span>, <span class="r">Arr</span>[<span class="r">n</span>].<span class="r">y</span>].<span class="r">type</span> = <span class="r">rdm.Next</span>(5, 7);<span class="g">//назначили тип</span></div>
<div class="cl" style="top:728.24px">            <span class="r">frm.ArrSqr</span>[<span class="r">Arr</span>[<span class="r">n</span>].<span class="r">x</span>, <span class="r">Arr</span>[<span class="r">n</span>].<span class="r">y</span>].<span class="r">Draw</span>(0);<span class="g">//прорисовали яблоко</span></div>
<div class="cl" style="top:746.00px">            <span class="r">Arr</span> = <span class="k">null</span>;</div>
<div class="cl" style="top:763.76px">        }</div>
<div class="cl" style="top:799.28px">    }</div>
<div class="cl" style="top:817.04px">}</div>
<div class="tx" style="letter-spacing:0;top:833.0px">// <b>Класс <span class="r">SnakeClass</span>-</b>в данном классе будет реализовано создание <span class="r">создание</span>(<span class="m"><span class="r">NewSnake</span>(<span class="k r">int</span></span></div>
<div class="tx" style="letter-spacing:0;top:855.0px"><span class="m">x, <span class="k r">int</span> y)</span>&nbsp; и прорисовка змейки (<span class="m"><span class="r">DrawSnake</span>()).</span></div>
<div class="cl" style="top:879.20px"><span class="k w">namespace</span> Snake</div>
<div class="cl" style="top:896.96px">{</div>
<div class="cl" style="top:914.72px">    <span class="k w">public</span> <span class="k">class</span> <span class="t r">SnakeClass</span></div>
<div class="cl" style="top:932.48px">    {</div>
<div class="cl" style="top:950.24px">        <span class="t r">GameFrm</span> <span class="r">frm</span>;</div>
<div class="cl" style="top:968.00px">        <span class="g">//конструктор</span></div>
<div class="cl" style="top:985.76px">        <span class="k w">public</span> <span class="r">SnakeClass</span>(<span class="t r">GameFrm</span> <span class="r">pFrm</span>)</div>
<div class="cl" style="top:1003.52px">        {</div>
<div class="cl" style="top:1021.28px">            <span class="r">frm</span> = <span class="r">pFrm</span>;</div>
<div class="cl" style="top:1039.04px">        }</div>
<div class="cl" style="top:1074.56px">        <span class="k w">public</span> <span class="k">void</span> <span class="r">NewSnake</span>(<span class="k r">int</span> x, <span class="k r">int</span> y)<span class="g">//новая змея</span></div>
<div class="cl" style="top:1092.32px">        {</div>
<div class="cl" style="top:1110.08px">            <span class="r">frm.Snake</span> = <span class="k">null</span>;</div>
<div class="cl" style="top:1127.84px">            <span class="r">frm.Snake</span> = <span class="k">new</span> <span class="t r">Snk</span>[3];</div>
<div class="cl" style="top:1145.60px">            <span class="k w">for</span> (<span class="k r">int</span> <span class="r">i</span> = 0; <span class="r">i</span> &lt; 3; <span class="r">i</span>++) <span class="r">frm.Snake</span>[<span class="r">i</span>].type = <span class="r">i</span> + 2;</div>
<div class="cl" style="top:1163.36px">            <span class="g">//параметры змеи в зависимости от стартовой точки</span></div>
</div>
</body></html>
